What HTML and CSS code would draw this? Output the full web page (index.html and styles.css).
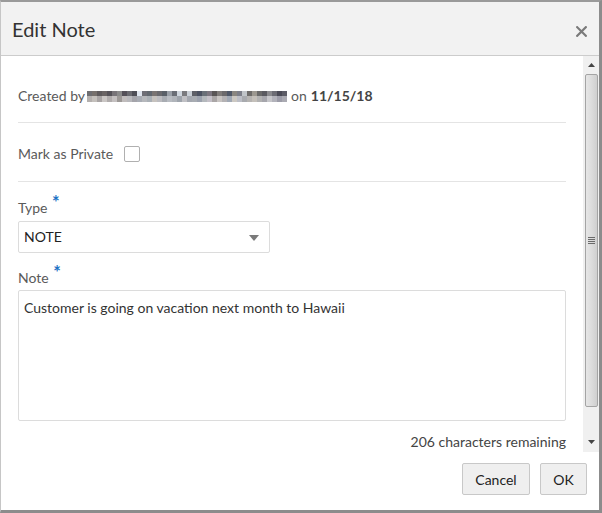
FILE: index.html
```html
<!DOCTYPE html>
<html>
<head>
<meta charset="utf-8">
<title>Edit Note</title>
<link rel="stylesheet" href="styles.css">
</head>
<body>
<div class="window">
  <div class="dialog-header">
    <h1 class="dialog-title">Edit Note</h1>
    <button class="close-btn" aria-label="Close">
      <svg width="11" height="11" viewBox="0 0 11 11"><path d="M1.2 1.2 L9.8 9.8 M9.8 1.2 L1.2 9.8" stroke="#7a7a7a" stroke-width="2.2" stroke-linecap="square"/></svg>
    </button>
  </div>
  <div class="dialog-middle">
    <div class="dialog-body">
      <div class="row meta">
        <span class="muted">Created by</span>
        <span class="redacted"><span class="px-row r1"></span><span class="px-row r2"></span></span>
        <span class="muted">on</span>
        <strong class="date">11/15/18</strong>
      </div>
      <div class="row private">
        <span class="muted">Mark as Private</span>
        <span class="checkbox"></span>
      </div>
      <div class="field-label type-label">Type <span class="req">*</span></div>
      <div class="select">
        <span>NOTE</span>
        <svg class="caret" width="10" height="6" viewBox="0 0 10 6"><path d="M0 0 H10 L5 6 Z" fill="#7a7a7a"/></svg>
      </div>
      <div class="field-label note-label">Note <span class="req">*</span></div>
      <div class="textarea">Customer is going on vacation next month to Hawaii</div>
      <div class="remaining">206 characters remaining</div>
    </div>
    <div class="scrollbar">
      <div class="sb-arrow up"><svg width="7" height="4" viewBox="0 0 7 4"><path d="M3.5 0 L7 4 H0 Z" fill="#444"/></svg></div>
      <div class="sb-thumb">
        <div class="grip"><i></i><i></i><i></i><i></i></div>
      </div>
      <div class="sb-track-rest"></div>
      <div class="sb-arrow down"><svg width="7" height="4" viewBox="0 0 7 4"><path d="M0 0 H7 L3.5 4 Z" fill="#444"/></svg></div>
    </div>
  </div>
  <div class="dialog-footer">
    <button class="btn cancel">Cancel</button>
    <button class="btn ok">OK</button>
  </div>
</div>
</body>
</html>
```
FILE: styles.css
```css
html, body {
  margin: 0;
  padding: 0;
  background: #ffffff;
}
body {
  font-family: Lato, "Open Sans", sans-serif;
  font-size: 14px;
  color: #333;
}
.window {
  width: 602px;
  height: 513px;
  box-sizing: border-box;
  border-top: 2px solid #9a9a9a;
  border-left: 1px solid #c6c6c6;
  border-right: 3px solid #8c8c8c;
  border-bottom: 3px solid #8c8c8c;
  display: flex;
  flex-direction: column;
  background: #fff;
}
.dialog-header {
  height: 53px;
  background: #f2f2f2;
  border-bottom: 1px solid #cccccc;
  display: flex;
  align-items: center;
  justify-content: space-between;
  padding: 0 12px 0 11px;
  flex: none;
}
.dialog-title {
  margin: 0;
  font-weight: normal;
  font-size: 20px;
  color: #333;
  line-height: 24px;
  padding-top: 1px;
}
.close-btn {
  border: 0;
  background: transparent;
  padding: 0;
  width: 11px;
  height: 11px;
  display: flex;
  margin-top: 5px;
}
.dialog-middle {
  height: 396px;
  display: flex;
  flex: none;
}
.dialog-body {
  flex: 1;
  padding: 0 17px 0 17px;
  display: flex;
  flex-direction: column;
}
.row {
  display: flex;
  align-items: center;
  line-height: 20px;
  border-bottom: 1px solid #e4e4e4;
}
.meta {
  padding: 30px 0 16px;
}
.muted { color: #5a5a5a; }
.date {
  color: #444;
  font-weight: bold;
  margin-left: 4px;
}
.redacted {
  display: inline-flex;
  flex-direction: column;
  width: 200px;
  height: 11px;
  margin: 0 4px 0 2px;
}
.px-row { display: block; height: 5px; width: 200px; }
.px-row.r2 { height: 6px; }
.r1 {
  background: linear-gradient(to right,
    #6e6e72 0 5px, #76706c 5px 10px, #5e5a5c 10px 15px, #6a6464 15px 20px, #555258 20px 25px,
    #787478 25px 30px, #8a8a8a 30px 35px, #545058 35px 40px, #6a6a70 40px 45px, #4e4e56 45px 50px,
    #dfe5ee 50px 55px, #6e6e76 55px 60px, #626870 60px 65px, #7a7472 65px 70px, #6a6a6e 70px 75px,
    #5a6068 75px 80px, #9aa0a8 80px 85px, #6a6e76 85px 90px, #cfd6de 90px 95px, #7a7a7e 95px 100px,
    #c9cfd6 100px 105px, #5e6068 105px 110px, #4c5262 110px 115px, #6a7078 115px 120px, #7c7680 120px 125px,
    #5a5656 125px 130px, #807c7a 130px 135px, #6c6a6c 135px 140px, #505868 140px 145px, #8a8680 145px 150px,
    #7c7e88 150px 155px, #c0c4c8 155px 160px, #6e6c6a 160px 165px, #9c9890 165px 170px, #6a6a6a 170px 175px,
    #5a5a60 175px 180px, #8a8a8e 180px 185px, #6c6c74 185px 190px, #4a4a56 190px 195px, #5c5c66 195px 200px);
}
.r2 {
  background: linear-gradient(to right,
    #b4b0ae 0 5px, #c4c0bc 5px 10px, #a8a4a4 10px 15px, #cac6c4 15px 20px, #b0acac 20px 25px,
    #c4c0c0 25px 30px, #9c9896 30px 35px, #c0bcbc 35px 40px, #b8b8bc 40px 45px, #a4a4aa 45px 50px,
    #a8acb4 50px 55px, #b6b8bc 55px 60px, #aab0b6 60px 65px, #c6c2be 65px 70px, #bcbcc0 70px 75px,
    #a8acb2 75px 80px, #b8bcc2 80px 85px, #b0b4ba 85px 90px, #9ea4ac 90px 95px, #c0c0c4 95px 100px,
    #a4a8b0 100px 105px, #a8acb2 105px 110px, #9ca2ae 110px 115px, #b4b8bc 115px 120px, #c4c0c8 120px 125px,
    #aaa6a6 125px 130px, #c8c4c2 130px 135px, #b4b2b4 135px 140px, #a0a8b4 140px 145px, #ccc8c2 145px 150px,
    #bcbec6 150px 155px, #a8aaae 155px 160px, #b6b4b2 160px 165px, #c4c0ba 165px 170px, #b2b2b2 170px 175px,
    #a6a6ac 175px 180px, #c6c6ca 180px 185px, #b2b2ba 185px 190px, #9c9ca8 190px 195px, #aaaab2 195px 200px);
}
.private {
  padding: 21px 0 17px;
}
.checkbox {
  width: 14px;
  height: 14px;
  border: 1px solid #b0b0b0;
  border-radius: 2px;
  margin-left: 11px;
  background: #fff;
}
.field-label {
  color: #5a5a5a;
  line-height: 20px;
}
.type-label { margin-top: 16px; }
.note-label { margin-top: 15px; }
.req {
  color: #1b72c4;
  font-size: 18px;
  font-weight: bold;
  position: relative;
  top: -4px;
  margin-left: 1px;
  line-height: 10px;
}
.select {
  margin-top: 3px;
  width: 252px;
  height: 32px;
  box-sizing: border-box;
  border: 1px solid #dcdcdc;
  border-radius: 2px;
  display: flex;
  align-items: center;
  justify-content: space-between;
  padding: 0 10px 0 5px;
  color: #222;
  line-height: 20px;
}
.caret { margin-top: 1px; }
.textarea {
  margin-top: 2px;
  height: 131px;
  box-sizing: border-box;
  border: 1px solid #dcdcdc;
  border-radius: 2px;
  padding: 7px 5px;
  line-height: 20px;
  color: #333;
}
.remaining {
  margin-top: 11px;
  text-align: right;
  line-height: 20px;
  color: #444;
}
.scrollbar {
  width: 16px;
  flex: none;
  background: #f0f0f0;
  display: flex;
  flex-direction: column;
  align-items: center;
}
.sb-arrow {
  height: 17px;
  width: 16px;
  display: flex;
  align-items: center;
  justify-content: center;
  flex: none;
}
.sb-thumb {
  width: 13px;
  height: 333px;
  margin-top: 1px;
  box-sizing: border-box;
  border: 1px solid #a4a4a4;
  border-radius: 2px;
  background: linear-gradient(to right, #e6e6e6, #dcdcdc 50%, #cfcfcf);
  display: flex;
  align-items: center;
  justify-content: center;
  flex: none;
}
.grip { display: flex; flex-direction: column; gap: 1px; }
.grip i { display: block; width: 7px; height: 1px; background: #6a6a6a; }
.sb-track-rest { flex: 1; }
.sb-arrow.down { height: 20px; }
.dialog-footer {
  flex: 1;
  display: flex;
  justify-content: flex-end;
  align-items: flex-start;
  padding: 11px 12px 0 0;
  gap: 10px;
}
.btn {
  font-family: Lato, "Open Sans", sans-serif;
  font-size: 14px;
  color: #222;
  background: #efefef;
  border: 1px solid #c8c8c8;
  border-radius: 2px;
  height: 32px;
  padding: 0;
}
.cancel { width: 68px; }
.ok { width: 47px; }
```
